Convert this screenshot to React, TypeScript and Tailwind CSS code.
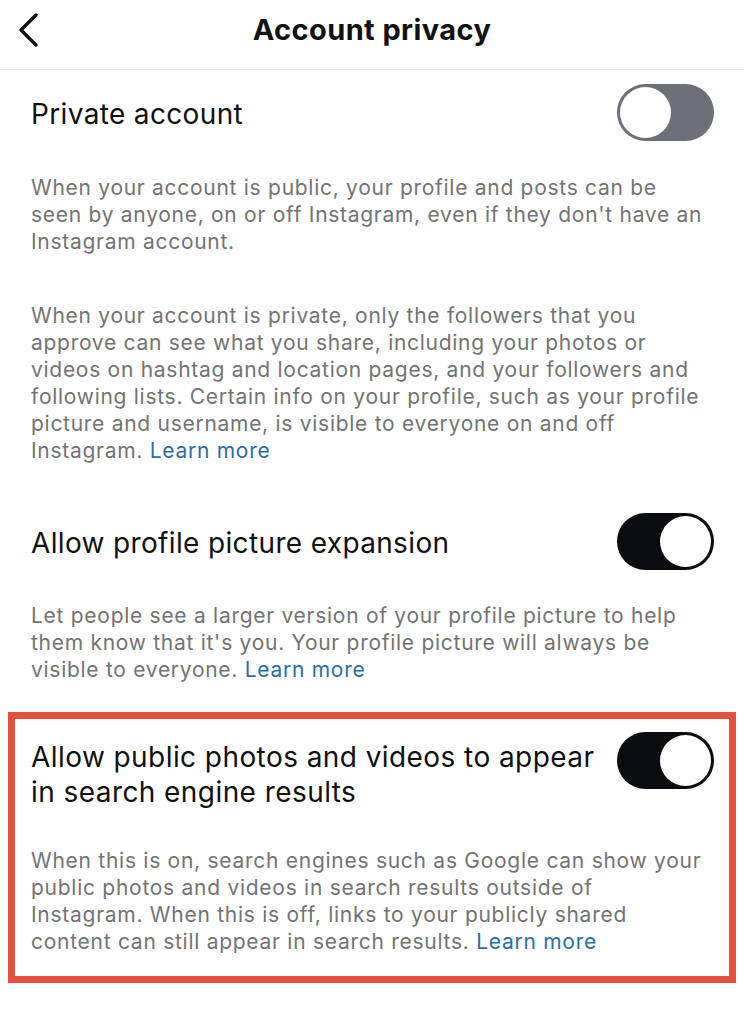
import React from 'react';

function Toggle({ on }: { on: boolean }) {
  return (
    <div
      className={`w-[97px] h-[57px] rounded-full p-[3px] flex shrink-0 ${
        on ? 'bg-[#0b0c10] justify-end' : 'bg-[#6b7079] justify-start'
      }`}
    >
      <div className="w-[51px] h-[51px] rounded-full bg-white" />
    </div>
  );
}

const Link = () => <span className="text-[#2b6f9f]">Learn more</span>;

function Lines({ lines, className }: { lines: React.ReactNode[]; className: string }) {
  return (
    <div className={className}>
      {lines.map((l, i) => (
        <div key={i} className="whitespace-nowrap">
          {l}
        </div>
      ))}
    </div>
  );
}

export default function App() {
  const desc = "text-[21px] leading-[27px] text-[#737373] tracking-[0.72px]";
  return (
    <div className="w-[744px] h-[1022px] bg-white overflow-hidden text-[#111]" style={{ fontFamily: 'Inter, "Noto Sans", sans-serif' }}>
      <header className="h-[70px] border-b border-[#ececec] flex items-center justify-center relative">
        <svg className="absolute left-[15px] top-[12px]" width="26" height="36" viewBox="0 0 26 36">
          <path d="M21 3 L6 18 L21 33" fill="none" stroke="#111" strokeWidth="3.4" strokeLinecap="round" strokeLinejoin="round" />
        </svg>
        <h1 className="text-[29px] font-bold tracking-[0.4px] -mt-[10px]">Account privacy</h1>
      </header>

      <section className="pl-[31px] pr-[30px]">
        <div className="flex items-center justify-between pt-[14px]">
          <div className="text-[28px] leading-[35px] tracking-[0.35px] mt-[3px]">Private account</div>
          <Toggle on={false} />
        </div>
        <Lines
          className={`${desc} mt-[33px]`}
          lines={[
            'When your account is public, your profile and posts can be',
            "seen by anyone, on or off Instagram, even if they don't have an",
            'Instagram account.',
          ]}
        />
        <Lines
          className={`${desc} mt-[47px]`}
          lines={[
            'When your account is private, only the followers that you',
            'approve can see what you share, including your photos or',
            'videos on hashtag and location pages, and your followers and',
            'following lists. Certain info on your profile, such as your profile',
            'picture and username, is visible to everyone on and off',
            <>Instagram. <Link /></>,
          ]}
        />
        <div className="flex items-center justify-between mt-[49px]">
          <div className="text-[28px] leading-[35px] tracking-[0.35px] mt-[3px]">Allow profile picture expansion</div>
          <Toggle on />
        </div>
        <Lines
          className={`${desc} mt-[32px]`}
          lines={[
            'Let people see a larger version of your profile picture to help',
            "them know that it's you. Your profile picture will always be",
            <>visible to everyone. <Link /></>,
          ]}
        />
      </section>

      <section className="mx-[8px] mt-[29px] border-[7px] border-[#e4513f] pl-[16px] pr-[15px] pt-[13px] pb-[21px]">
        <div className="flex items-start justify-between">
          <Lines
            className="text-[28px] leading-[35px] mt-[8px] tracking-[0.43px]"
            lines={['Allow public photos and videos to appear', 'in search engine results']}
          />
          <Toggle on />
        </div>
        <Lines
          className="text-[21px] leading-[27px] text-[#737373] mt-[37px] tracking-[0.73px]"
          lines={[
            'When this is on, search engines such as Google can show your',
            'public photos and videos in search results outside of',
            'Instagram. When this is off, links to your publicly shared',
            <>content can still appear in search results. <Link /></>,
          ]}
        />
      </section>
    </div>
  );
}
